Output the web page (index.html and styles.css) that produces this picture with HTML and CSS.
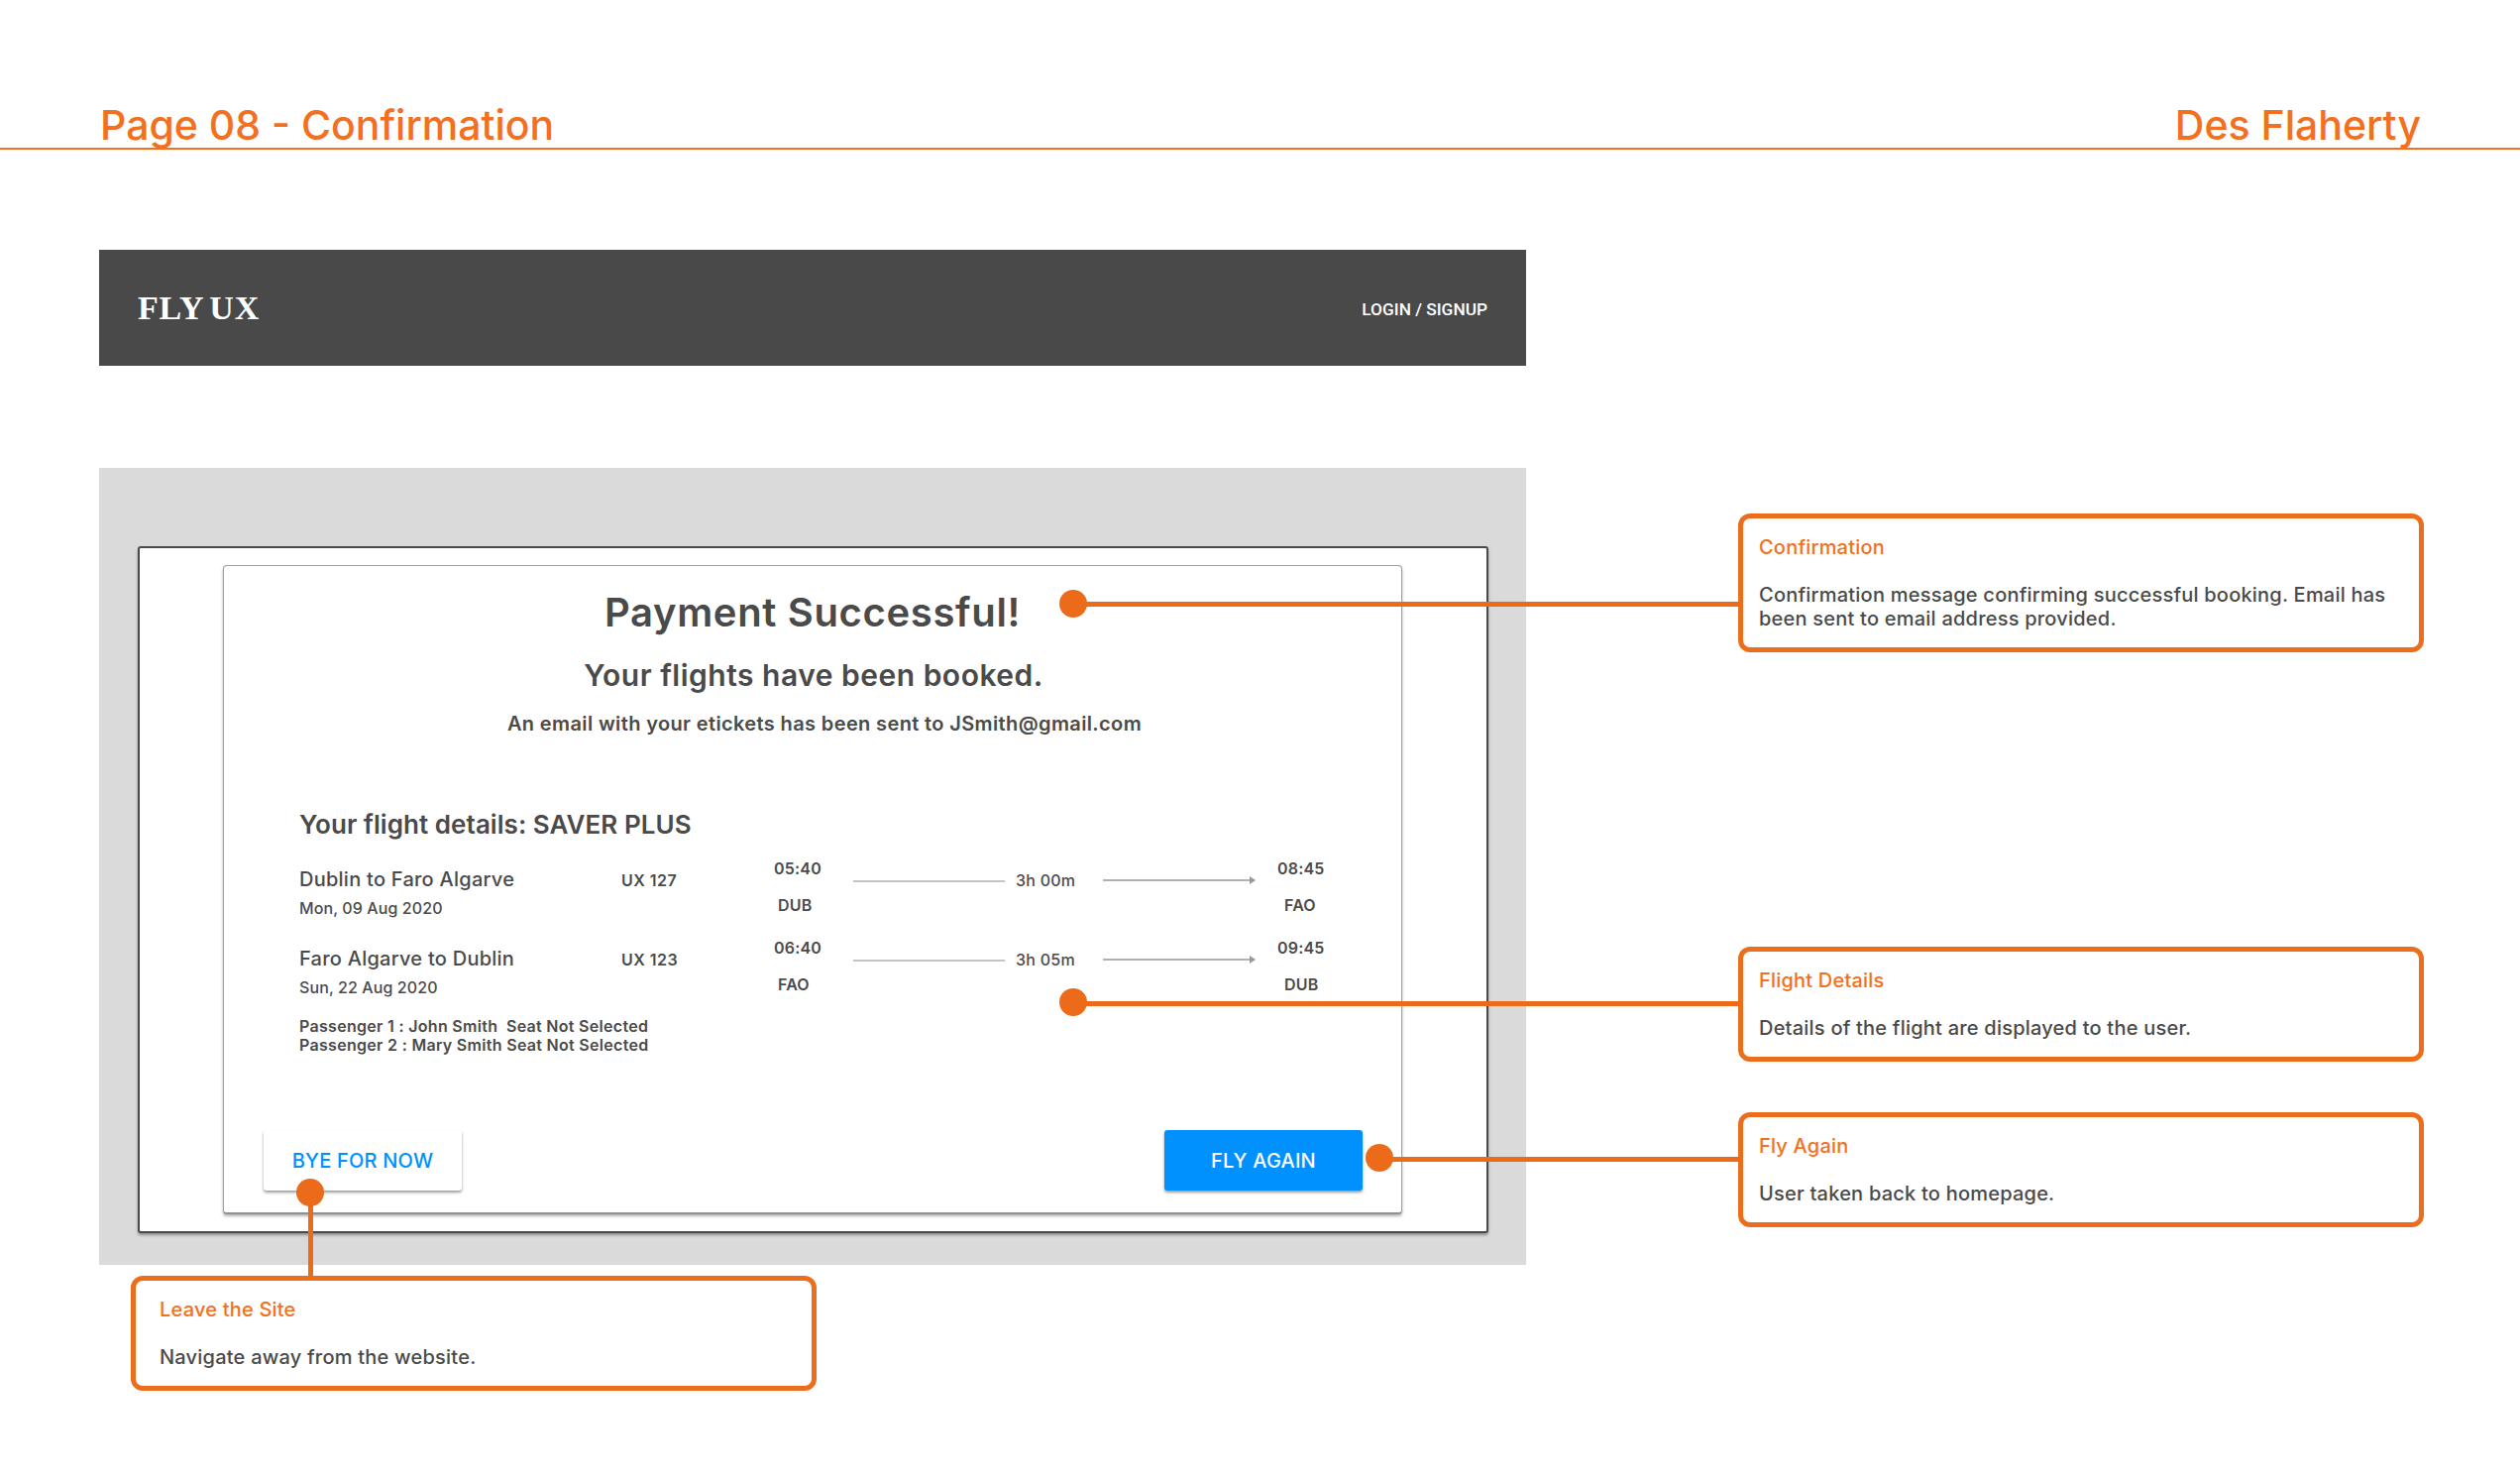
FILE: index.html
```html
<!DOCTYPE html>
<html lang="en">
<head>
    <meta charset="UTF-8">
    <meta name="viewport" content="width=device-width, initial-scale=1.0">
    <link rel="stylesheet" href="styles.css">
    <title>Page 08 - Confirmation</title>
</head>
<body>
    <div class="sheet">
        <header class="page-head">
            <span>Page 08 - Confirmation</span>
            <span>Des Flaherty</span>
        </header>

        <nav class="site-bar">
            <span class="logo">FLY UX</span>
            <a class="login">LOGIN / SIGNUP</a>
        </nav>

        <section class="panel">
            <div class="frame">
                <div class="card">
                    <h1 class="title">Payment Successful!</h1>
                    <h2 class="subtitle">Your flights have been booked.</h2>
                    <p class="email-note">An email with your etickets has been sent to JSmith@gmail.com</p>

                    <h3 class="details-head">Your flight details: SAVER PLUS</h3>

                    <div class="flight">
                        <div class="route">
                            <div class="route-name">Dublin to Faro Algarve</div>
                            <div class="route-date">Mon, 09 Aug 2020</div>
                        </div>
                        <div class="flight-no">UX 127</div>
                        <div class="stop stop-dep"><div>05:40</div><div class="code">DUB</div></div>
                        <div class="line"></div>
                        <div class="duration">3h 00m</div>
                        <svg class="arrow" width="154" height="10" viewBox="0 0 154 10"><path d="M0 5H148" stroke="#979797" stroke-width="1.5"/><path d="M148 1L154 5L148 9Z" fill="#979797"/></svg>
                        <div class="stop stop-arr"><div>08:45</div><div class="code">FAO</div></div>
                    </div>

                    <div class="flight">
                        <div class="route">
                            <div class="route-name">Faro Algarve to Dublin</div>
                            <div class="route-date">Sun, 22 Aug 2020</div>
                        </div>
                        <div class="flight-no">UX 123</div>
                        <div class="stop stop-dep"><div>06:40</div><div class="code">FAO</div></div>
                        <div class="line"></div>
                        <div class="duration">3h 05m</div>
                        <svg class="arrow" width="154" height="10" viewBox="0 0 154 10"><path d="M0 5H148" stroke="#979797" stroke-width="1.5"/><path d="M148 1L154 5L148 9Z" fill="#979797"/></svg>
                        <div class="stop stop-arr"><div>09:45</div><div class="code">DUB</div></div>
                    </div>

                    <div class="passengers">
                        <div>Passenger 1 : John Smith&nbsp; Seat Not Selected</div>
                        <div>Passenger 2 : Mary Smith Seat Not Selected</div>
                    </div>

                    <div class="actions">
                        <button class="btn btn-light" type="button">BYE FOR NOW</button>
                        <button class="btn btn-blue" type="button">FLY AGAIN</button>
                    </div>
                </div>
            </div>
        </section>

        <!-- annotations sit on top of the wireframe -->
        <div class="wire wire-h wire-1"></div>
        <div class="wire wire-h wire-2"></div>
        <div class="wire wire-h wire-3"></div>
        <div class="wire wire-v wire-4"></div>
        <div class="dot dot-1"></div>
        <div class="dot dot-2"></div>
        <div class="dot dot-3"></div>
        <div class="dot dot-4"></div>

        <aside class="note note-1">
            <h4>Confirmation</h4>
            <p>Confirmation message confirming successful booking. Email has been sent to email address provided.</p>
        </aside>
        <aside class="note note-2">
            <h4>Flight Details</h4>
            <p>Details of the flight are displayed to the user.</p>
        </aside>
        <aside class="note note-3">
            <h4>Fly Again</h4>
            <p>User taken back to homepage.</p>
        </aside>
        <aside class="note note-4">
            <h4>Leave the Site</h4>
            <p>Navigate away from the website.</p>
        </aside>
    </div>
</body>
</html>
```

FILE: styles.css
```css
* {
    box-sizing: border-box;
}
body {
    margin: 0;
    background: #fff;
    color: #4a4a4a;
    font-family: Inter, "Noto Sans", sans-serif;
}
h1, h2, h3, h4, p {
    margin: 0;
}
.sheet {
    position: relative;
    width: 2543px;
    height: 1492px;
    overflow: hidden;
}

/* page header */
.page-head {
    display: flex;
    justify-content: space-between;
    align-items: flex-end;
    height: 151px;
    padding: 0 100px 0 101px;
    border-bottom: 2px solid #f27020;
    color: #f27020;
    font-size: 41px;
    font-weight: 500;
    line-height: 45px;
}

/* site nav */
.site-bar {
    display: flex;
    justify-content: space-between;
    align-items: center;
    width: 1440px;
    height: 117px;
    margin: 101px 0 0 100px;
    padding: 0 39px;
    background: #494949;
    color: #fff;
}
.logo {
    font-family: "Liberation Serif", serif;
    font-size: 34px;
    font-weight: 700;
    letter-spacing: 0.8px;
    word-spacing: -3px;
}
.login {
    padding-top: 2px;
    font-family: Roboto, sans-serif;
    font-size: 17.3px;
    font-weight: 500;
}

/* grey panel with the page mock */
.panel {
    width: 1440px;
    height: 804px;
    margin: 103px 0 0 100px;
    padding: 79px 38px 0 39px;
    background: #dadada;
}
.frame {
    height: 693px;
    padding: 17px 85px 17px 84px;
    background: #fff;
    border: 2px solid #4a4a4a;
    border-radius: 3px;
    box-shadow: 0 2px 3px rgba(0, 0, 0, 0.35);
}
.card {
    height: 655px;
    padding: 0 76px;
    background: #fff;
    border: 1px solid #a0a0a0;
    border-bottom: 2px solid #8f8f8f;
    border-radius: 4px;
    box-shadow: 0 2px 3px rgba(0, 0, 0, 0.3);
}
.title {
    margin-top: 22px;
    text-align: center;
    font-size: 40px;
    font-weight: 600;
    letter-spacing: 0.65px;
    line-height: 50px;
}
.subtitle {
    margin-top: 18px;
    padding-left: 2px;
    text-align: center;
    font-size: 30px;
    font-weight: 600;
    letter-spacing: 0.5px;
    line-height: 40px;
}
.email-note {
    margin-top: 15px;
    padding-left: 24px;
    text-align: center;
    font-size: 20px;
    font-weight: 600;
    letter-spacing: 0.37px;
    line-height: 28px;
}
.details-head {
    margin-top: 72px;
    font-size: 26px;
    font-weight: 600;
    letter-spacing: 0.05px;
    line-height: 32px;
}

/* flight rows */
.flight {
    display: flex;
    height: 80px;
    margin-top: 13px;
}
.flight + .flight {
    margin-top: 0;
}
.route {
    width: 325px;
    padding-top: 13px;
}
.route-name {
    font-size: 20px;
    font-weight: 500;
    letter-spacing: 0.25px;
    line-height: 26px;
}
.route-date {
    margin-top: 6px;
    font-size: 16px;
    font-weight: 500;
    letter-spacing: 0.1px;
    line-height: 20px;
}
.flight-no {
    width: 154px;
    padding-top: 17px;
    font-size: 16px;
    font-weight: 600;
    letter-spacing: 0.5px;
    line-height: 20px;
}
.stop {
    padding-top: 5px;
    font-size: 16px;
    font-weight: 600;
    letter-spacing: 0.2px;
    line-height: 20px;
}
.stop .code {
    margin-top: 17px;
}
.stop-dep {
    width: 80px;
}
.stop-dep .code {
    padding-left: 4px;
}
.stop-arr {
    margin-left: 22px;
}
.stop-arr .code {
    padding-left: 7px;
}
.line {
    width: 153px;
    height: 2px;
    margin-top: 27px;
    background: #c4c4c4;
}
.duration {
    width: 99px;
    padding: 17px 0 0 11px;
    font-size: 16px;
    font-weight: 500;
    letter-spacing: 0.25px;
    line-height: 20px;
}
.arrow {
    display: block;
    margin-top: 22px;
}
.passengers {
    margin-top: 5px;
    font-size: 16px;
    font-weight: 600;
    letter-spacing: 0.3px;
    line-height: 19px;
}
.actions {
    display: flex;
    justify-content: space-between;
    margin: 76px -37px 0 -36px;
}
.btn {
    width: 200px;
    height: 61px;
    border: 0;
    border-radius: 3px;
    font-family: Inter, sans-serif;
    font-size: 20px;
    font-weight: 500;
    letter-spacing: 0.2px;
    box-shadow: 0 2px 3px rgba(0, 0, 0, 0.4);
}
.btn-light {
    background: #fff;
    color: #0091ff;
}
.btn-blue {
    background: #0091ff;
    color: #fff;
}

/* callouts */
.note {
    position: absolute;
    width: 692px;
    height: 116px;
    padding: 17px 16px 0;
    background: #fff;
    border: 5px solid #ec6e1c;
    border-radius: 12px;
}
.note h4 {
    color: #f27020;
    font-size: 20px;
    font-weight: 500;
    letter-spacing: 0.2px;
    line-height: 24px;
}
.note p {
    margin-top: 24px;
    font-size: 20px;
    font-weight: 500;
    letter-spacing: 0.22px;
    line-height: 24px;
}
.note-1 {
    left: 1754px;
    top: 518px;
    height: 140px;
}
.note-2 {
    left: 1754px;
    top: 955px;
}
.note-3 {
    left: 1754px;
    top: 1122px;
}
.note-4 {
    left: 132px;
    top: 1287px;
    padding-left: 24px;
}
.wire {
    position: absolute;
    background: #ec6b1a;
}
.wire-h {
    height: 5px;
}
.wire-v {
    width: 5px;
}
.wire-1 {
    left: 1083px;
    top: 607px;
    width: 675px;
}
.wire-2 {
    left: 1083px;
    top: 1010px;
    width: 675px;
}
.wire-3 {
    left: 1392px;
    top: 1167px;
    width: 366px;
}
.wire-4 {
    left: 311px;
    top: 1203px;
    height: 88px;
}
.dot {
    position: absolute;
    width: 28px;
    height: 28px;
    border-radius: 50%;
    background: #ec6b1a;
}
.dot-1 {
    left: 1069px;
    top: 595px;
}
.dot-2 {
    left: 1069px;
    top: 997px;
}
.dot-3 {
    left: 1378px;
    top: 1154px;
}
.dot-4 {
    left: 299px;
    top: 1189px;
}
```
